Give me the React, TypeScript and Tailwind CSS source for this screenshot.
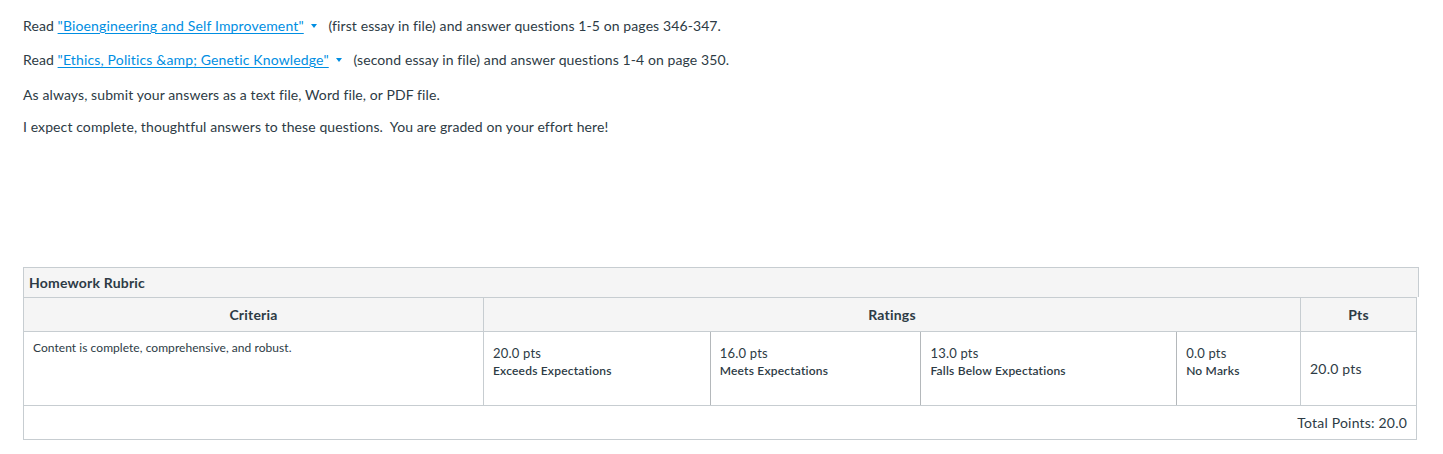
import type { ReactNode } from 'react';

type Rating = {
  points: string;
  description: string;
  width: string;
};

const ratings: Rating[] = [
  { points: '20.0 pts', description: 'Exceeds Expectations', width: 'w-[227px]' },
  { points: '16.0 pts', description: 'Meets Expectations', width: 'w-[211px]' },
  { points: '13.0 pts', description: 'Falls Below Expectations', width: 'w-[256px]' },
  { points: '0.0 pts', description: 'No Marks', width: 'w-[123px]' },
];

// little caret shown next to file links
function FileMenuCaret() {
  return (
    <svg width="6" height="4" viewBox="0 0 6 4" className="inline-block ml-[7px] mr-[8px] mb-[2px]">
      <path d="M0 0 L6 0 L3 4 Z" fill="#008ee2" />
    </svg>
  );
}

function FileLink({ children }: { children: ReactNode }) {
  return (
    <a href="#" className="text-[#008ee2] underline underline-offset-2 tracking-[0.15px]">
      {children}
    </a>
  );
}

export default function App() {
  return (
    <div
      className="min-h-[454px] bg-white text-[#2d3b45] pt-[15px] tracking-[0.1px]"
      style={{ fontFamily: 'Lato, "Open Sans", sans-serif' }}
    >
      <div className="px-[23px] text-[14px] leading-[21px]">
        <p className="mb-[13px]">
          Read <FileLink>"Bioengineering and Self Improvement"</FileLink>
          <FileMenuCaret />
          &nbsp;(first essay in file) and answer questions 1-5 on pages 346-347.
        </p>
        <p className="mb-[14px]">
          Read <FileLink>"Ethics, Politics &amp;amp; Genetic Knowledge"</FileLink>
          <FileMenuCaret />
          &nbsp;(second essay in file) and answer questions 1-4 on page 350.
        </p>
        <p className="mb-[11px]">As always, submit your answers as a text file, Word file, or PDF file.</p>
        <p>I expect complete, thoughtful answers to these questions.&nbsp; You are graded on your effort here!</p>
      </div>

      <div className="ml-[23px] mt-[130px] w-[1396px] tracking-[0.2px]">
        <div className="h-[30px] border-x border-t border-[#c7cdd1] bg-[#f5f5f5] flex items-center px-[5px] text-[14px] font-bold">
          Homework Rubric
        </div>

        <div className="w-[1394px] border border-[#c7cdd1] text-[14px]">
          {/* column headings */}
          <div className="flex h-[34px] bg-[#f5f5f5] border-b border-[#c7cdd1] font-bold">
            <div className="w-[460px] border-r border-[#c7cdd1] flex items-center justify-center">Criteria</div>
            <div className="w-[817px] border-r border-[#c7cdd1] flex items-center justify-center">Ratings</div>
            <div className="flex-1 flex items-center justify-center">Pts</div>
          </div>

          {/* criterion row */}
          <div className="flex h-[74px] border-b border-[#c7cdd1]">
            <div className="w-[460px] border-r border-[#c7cdd1] px-[9px] pt-[8px] text-[12px] leading-[16px] tracking-[0.05px]">
              Content is complete, comprehensive, and robust.
            </div>
            <div className="w-[817px] border-r border-[#c7cdd1] flex">
              {ratings.map((r, i) => (
                <div
                  key={r.points}
                  className={`${r.width} ${i < ratings.length - 1 ? 'border-r border-[#b4b8bb]' : ''} px-[9px] pt-[12px] leading-[18px]`}
                >
                  <div className="text-[13px]">{r.points}</div>
                  <div className="text-[12px] font-semibold">{r.description}</div>
                </div>
              ))}
            </div>
            <div className="flex-1 flex items-center px-[9px]">20.0 pts</div>
          </div>

          {/* total */}
          <div className="h-[33px] flex items-center justify-end pr-[9px]">Total Points: 20.0</div>
        </div>
      </div>
    </div>
  );
}
